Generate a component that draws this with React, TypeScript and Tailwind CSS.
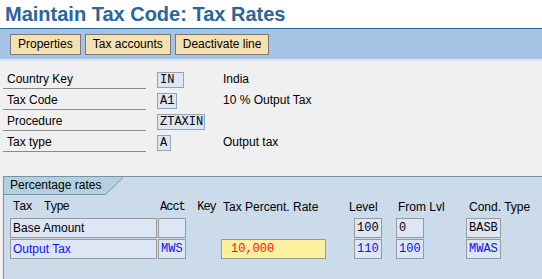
import React from "react";

const sans = { fontFamily: '"Liberation Sans", Arial, sans-serif' };
const mono = { fontFamily: '"Liberation Mono", "Courier New", monospace' };

function Field({ w, value, className = "" }: { w: string; value: string; className?: string }) {
  return (
    <div
      className={`${w} h-[16px] mb-px border border-[#95a3b6] bg-[#dce6f4] text-[12px] leading-[14px] pl-[2px] text-black whitespace-nowrap ${className}`}
      style={mono}
    >
      {value}
    </div>
  );
}

function FormRow({ label, fieldW, value, desc }: { label: string; fieldW: string; value: string; desc?: string }) {
  return (
    <div className="flex items-end h-[21px]">
      <div className="ml-[3px] w-[143px] h-full border-b border-[#8a8a8a] flex items-end pb-[1px] pl-[4px] text-[12px] leading-[15px] text-black">
        {label}
      </div>
      <div className="ml-[11px] flex items-end">
        <Field w={fieldW} value={value} />
      </div>
      {desc ? (
        <div className="absolute-none" />
      ) : null}
    </div>
  );
}

export default function App() {
  const rows: { label: string; w: string; v: string; d?: string }[] = [
    { label: "Country Key", w: "w-[27px]", v: "IN", d: "India" },
    { label: "Tax Code", w: "w-[20px]", v: "A1", d: "10 % Output Tax" },
    { label: "Procedure", w: "w-[48px]", v: "ZTAXIN" },
    { label: "Tax type", w: "w-[14px]", v: "A", d: "Output tax" },
  ];
  return (
    <div className="w-[542px] h-[279px] bg-[#f0f0f0] overflow-hidden flex flex-col" style={sans}>
      <div className="h-[28px] bg-white pl-[5px] text-[20px] leading-[28px] font-bold text-[#2a659b] whitespace-nowrap">
        Maintain Tax Code: Tax Rates
      </div>
      <div className="h-px bg-[#2d6ca2]" />
      <div className="h-[30px] bg-[#a4c3e5] flex items-start pt-[5px] pl-[10px] gap-[4px]">
        {["Properties", "Tax accounts", "Deactivate line"].map((t) => (
          <div
            key={t}
            className="h-[21px] border border-[#777777] bg-[#f4e0b0] px-[7px] text-[12px] leading-[19px] text-black whitespace-nowrap"
          >
            {t}
          </div>
        ))}
      </div>
      <div className="h-[2px] bg-[#d8e3ef]" />
      <div className="pt-[7px] flex flex-col">
        {rows.map((r) => (
          <div key={r.label} className="flex items-end h-[21px]">
            <div className="ml-[3px] w-[143px] h-full border-b border-[#8a8a8a] flex items-end pb-[1px] pl-[4px] text-[12px] leading-[15px] text-black">
              {r.label}
            </div>
            <div className="ml-[11px] w-[66px] flex items-end">
              <Field w={r.w} value={r.v} />
            </div>
            <div className="pb-[2px] text-[12px] leading-[15px] text-black whitespace-nowrap">{r.d ?? ""}</div>
          </div>
        ))}
      </div>
      <div className="mt-[24px] ml-[3px] flex-1 border-t border-l border-[#7593b0] bg-[#cbdbea] flex flex-col">
        <div className="flex h-[18px]">
          <div className="w-[101px] h-full bg-[#b3d0dc] border-b border-[#7593b0] pl-[6px] text-[12px] leading-[17px] text-black whitespace-nowrap">
            Percentage rates
          </div>
          <svg width="19" height="18" viewBox="0 0 19 18" className="block">
            <polygon points="0,0 18,0 1,17.5 0,17.5" fill="#b3d0dc" />
            <line x1="0" y1="17.5" x2="1" y2="17.5" stroke="#7593b0" strokeWidth="1" />
            <line x1="0.5" y1="17.5" x2="18" y2="0.5" stroke="#7593b0" strokeWidth="1" />
          </svg>
        </div>
        <div className="flex h-[22px] items-center text-[12px] leading-[15px] text-black whitespace-nowrap pt-[2px]">
          <span className="ml-[9px] w-[147px] tracking-[-1px]" style={mono}>Tax&nbsp;&nbsp;Type</span>
          <span className="w-[63px] tracking-[-1px]" style={mono}>Acct&nbsp;&nbsp;Key</span>
          <span className="w-[126px]">Tax Percent. Rate</span>
          <span className="w-[49px]">Level</span>
          <span className="w-[71px]">From Lvl</span>
          <span>Cond. Type</span>
        </div>
        {/* row 1 */}
        <div className="flex h-[20px] mt-px ml-[6px] text-[12px]">
          <div className="w-[147px] h-[20px] border border-[#999999] bg-[#dce6f4] pl-[2px] leading-[18px] text-black">
            Base Amount
          </div>
          <div className="w-[28px] h-[20px] ml-px border border-[#999999] bg-[#dce6f4]" />
          <div className="w-[105px] ml-[35px]" />
          <div className="w-[28px] h-[20px] ml-[28px] border border-[#999999] bg-[#dce6f4] pl-[2px] leading-[18px] text-black" style={mono}>100</div>
          <div className="w-[28px] h-[20px] ml-[14px] border border-[#999999] bg-[#dce6f4] pl-[2px] leading-[18px] text-black" style={mono}>0</div>
          <div className="w-[35px] h-[20px] ml-[42px] border border-[#999999] bg-[#dce6f4] pl-[2px] leading-[18px] text-black" style={mono}>BASB</div>
        </div>
        {/* row 2 */}
        <div className="flex h-[20px] mt-px ml-[6px] text-[12px]">
          <div className="w-[147px] h-[20px] border border-[#999999] bg-[#dce6f4] pl-[2px] leading-[18px] text-[#1010ff]">
            Output Tax
          </div>
          <div className="w-[28px] h-[20px] ml-px border border-[#999999] bg-[#dce6f4] pl-[2px] leading-[18px] text-[#1010ff]" style={mono}>MWS</div>
          <div className="w-[105px] h-[20px] ml-[35px] border border-[#999999] bg-[#fff09f] pl-[9px] leading-[18px] text-[#ff1010]" style={mono}>10,000</div>
          <div className="w-[28px] h-[20px] ml-[28px] border border-[#999999] bg-[#dce6f4] pl-[2px] leading-[18px] text-[#1010ff]" style={mono}>110</div>
          <div className="w-[28px] h-[20px] ml-[14px] border border-[#999999] bg-[#dce6f4] pl-[2px] leading-[18px] text-[#1010ff]" style={mono}>100</div>
          <div className="w-[35px] h-[20px] ml-[42px] border border-[#999999] bg-[#dce6f4] pl-[2px] leading-[18px] text-[#1010ff]" style={mono}>MWAS</div>
        </div>
      </div>
    </div>
  );
}
